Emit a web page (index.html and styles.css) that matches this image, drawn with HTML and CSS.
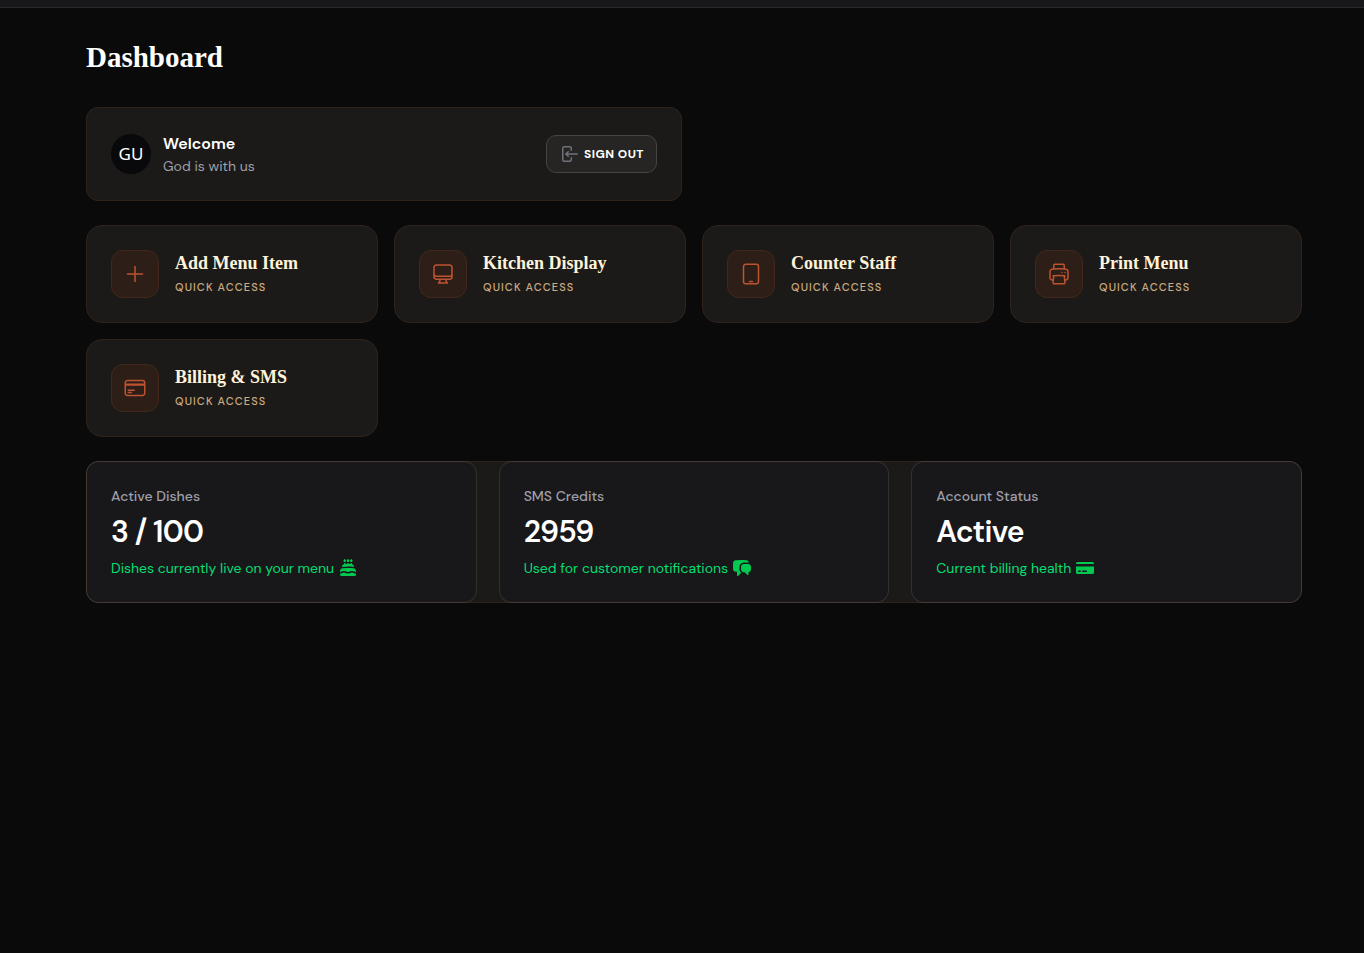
FILE: index.html
```html
<!DOCTYPE html>
<html lang="en">
<head>
    <meta charset="UTF-8">
    <meta name="viewport" content="width=device-width, initial-scale=1.0">
    <title>Dashboard</title>
    <link rel="stylesheet" href="styles.css">
</head>
<body>
    <div class="topbar"></div>
    <main class="page">
        <h1>Dashboard</h1>

        <div class="widgets">
            <section class="card account">
                <div class="avatar">GU</div>
                <div class="account-text">
                    <h2>Welcome</h2>
                    <p>God is with us</p>
                </div>
                <button type="button" class="sign-out">
                    <svg viewBox="0 0 20 20" aria-hidden="true"><path d="M3 4.25A2.25 2.25 0 0 1 5.25 2h5.5A2.25 2.25 0 0 1 13 4.25v2a.75.75 0 0 1-1.5 0v-2a.75.75 0 0 0-.75-.75h-5.5a.75.75 0 0 0-.75.75v11.5c0 .414.336.75.75.75h5.5a.75.75 0 0 0 .75-.75v-2a.75.75 0 0 1 1.5 0v2A2.25 2.25 0 0 1 10.75 18h-5.5A2.25 2.25 0 0 1 3 15.75V4.25Z"/><path d="M19 10a.75.75 0 0 0-.75-.75H8.704l1.048-.943a.75.75 0 1 0-1.004-1.114l-2.5 2.25a.75.75 0 0 0 0 1.114l2.5 2.25a.75.75 0 1 0 1.004-1.114l-1.048-.943h9.546A.75.75 0 0 0 19 10Z"/></svg>
                    <span>SIGN OUT</span>
                </button>
            </section>

            <nav class="shortcuts">
                <a href="#" class="card shortcut">
                    <span class="shortcut-icon">
                        <svg viewBox="0 0 24 24" aria-hidden="true"><path d="M12 4.5v15m7.5-7.5h-15"/></svg>
                    </span>
                    <span class="shortcut-text">
                        <strong>Add Menu Item</strong>
                        <small>QUICK ACCESS</small>
                    </span>
                </a>
                <a href="#" class="card shortcut">
                    <span class="shortcut-icon">
                        <svg viewBox="0 0 24 24" aria-hidden="true"><path d="M9 17.25v1.007a3 3 0 0 1-.879 2.122L7.5 21h9l-.621-.621A3 3 0 0 1 15 18.257V17.25m6-12V15a2.25 2.25 0 0 1-2.25 2.25H5.25A2.25 2.25 0 0 1 3 15V5.25m18 0A2.25 2.25 0 0 0 18.75 3H5.25A2.25 2.25 0 0 0 3 5.25m18 0V12a2.25 2.25 0 0 1-2.25 2.25H5.25A2.25 2.25 0 0 1 3 12V5.25"/></svg>
                    </span>
                    <span class="shortcut-text">
                        <strong>Kitchen Display</strong>
                        <small>QUICK ACCESS</small>
                    </span>
                </a>
                <a href="#" class="card shortcut">
                    <span class="shortcut-icon">
                        <svg viewBox="0 0 24 24" aria-hidden="true"><path d="M10.5 19.5h3m-6.75 2.25h10.5a2.25 2.25 0 0 0 2.25-2.25v-15a2.25 2.25 0 0 0-2.25-2.25H6.75A2.25 2.25 0 0 0 4.5 4.5v15a2.25 2.25 0 0 0 2.25 2.25Z"/></svg>
                    </span>
                    <span class="shortcut-text">
                        <strong>Counter Staff</strong>
                        <small>QUICK ACCESS</small>
                    </span>
                </a>
                <a href="#" class="card shortcut">
                    <span class="shortcut-icon">
                        <svg viewBox="0 0 24 24" aria-hidden="true"><path d="M6.72 13.829c-.24.03-.48.062-.72.096m.72-.096a42.415 42.415 0 0 1 10.56 0m-10.56 0L6.34 18m10.94-4.171c.24.03.48.062.72.096m-.72-.096L17.66 18m0 0 .229 2.523a1.125 1.125 0 0 1-1.12 1.227H7.231c-.662 0-1.18-.568-1.12-1.227L6.34 18m11.318 0h1.091A2.25 2.25 0 0 0 21 15.75V9.456c0-1.081-.768-2.015-1.837-2.175a48.055 48.055 0 0 0-1.913-.247M6.34 18H5.25A2.25 2.25 0 0 1 3 15.75V9.456c0-1.081.768-2.015 1.837-2.175a48.041 48.041 0 0 1 1.913-.247m10.5 0a48.536 48.536 0 0 0-10.5 0m10.5 0V3.375c0-.621-.504-1.125-1.125-1.125h-8.25c-.621 0-1.125.504-1.125 1.125v3.659M18 10.5h.008v.008H18V10.5Zm-3 0h.008v.008H15V10.5Z"/></svg>
                    </span>
                    <span class="shortcut-text">
                        <strong>Print Menu</strong>
                        <small>QUICK ACCESS</small>
                    </span>
                </a>
                <a href="#" class="card shortcut">
                    <span class="shortcut-icon">
                        <svg viewBox="0 0 24 24" aria-hidden="true"><path d="M2.25 8.25h19.5M2.25 9h19.5m-16.5 5.25h6m-6 2.25h3m-3.75 3h15a2.25 2.25 0 0 0 2.25-2.25V6.75A2.25 2.25 0 0 0 19.5 4.5h-15a2.25 2.25 0 0 0-2.25 2.25v10.5A2.25 2.25 0 0 0 4.5 19.5Z"/></svg>
                    </span>
                    <span class="shortcut-text">
                        <strong>Billing &amp; SMS</strong>
                        <small>QUICK ACCESS</small>
                    </span>
                </a>
            </nav>

            <section class="stats">
                <div class="stat">
                    <p class="stat-label">Active Dishes</p>
                    <p class="stat-value">3 / 100</p>
                    <p class="stat-note">
                        <span>Dishes currently live on your menu</span>
                        <svg viewBox="0 0 20 20" aria-hidden="true"><path d="m6.75.98-.884.883a1.25 1.25 0 1 0 1.768 0L6.75.98ZM13.25.98l-.884.883a1.25 1.25 0 1 0 1.768 0L13.25.98ZM10 .98l.884.883a1.25 1.25 0 1 1-1.768 0L10 .98ZM7.5 5.75a.75.75 0 0 0-1.5 0v.464c-1.179.304-2 1.39-2 2.622v.094c.1-.02.202-.038.306-.052A42.867 42.867 0 0 1 10 8.5c1.93 0 3.83.129 5.694.378.104.014.206.032.306.052v-.094c0-1.232-.821-2.317-2-2.622V5.75a.75.75 0 0 0-1.5 0v.318a45.645 45.645 0 0 0-1.75-.062V5.75a.75.75 0 0 0-1.5 0v.256c-.586.01-1.17.03-1.75.062V5.75ZM4.505 10.365A41.36 41.36 0 0 1 10 10c1.863 0 3.697.124 5.495.365C16.967 10.562 18 11.838 18 13.28v.693a3.72 3.72 0 0 1-1.665-.393 5.222 5.222 0 0 0-4.67 0 3.722 3.722 0 0 1-3.33 0 5.222 5.222 0 0 0-4.67 0A3.72 3.72 0 0 1 2 13.972v-.693c0-1.441 1.033-2.717 2.505-2.914ZM15.665 14.92a5.22 5.22 0 0 0 2.335.552V16.5a1.5 1.5 0 0 1-1.5 1.5h-13A1.5 1.5 0 0 1 2 16.5v-1.028c.8 0 1.6-.184 2.335-.551a3.722 3.722 0 0 1 3.33 0c1.47.735 3.2.735 4.67 0a3.722 3.722 0 0 1 3.33 0Z"/></svg>
                    </p>
                </div>
                <div class="stat">
                    <p class="stat-label">SMS Credits</p>
                    <p class="stat-value">2959</p>
                    <p class="stat-note">
                        <span>Used for customer notifications</span>
                        <svg viewBox="0 0 20 20" aria-hidden="true"><path d="M3.505 2.365A41.369 41.369 0 0 1 9 2c1.863 0 3.697.124 5.495.365 1.247.167 2.18 1.108 2.435 2.268a4.45 4.45 0 0 0-.577-.069 43.141 43.141 0 0 0-4.706 0C9.229 4.696 7.5 6.727 7.5 8.998v2.24c0 1.413.67 2.735 1.76 3.562l-2.98 2.98A.75.75 0 0 1 5 17.25v-3.443c-.501-.048-1-.106-1.495-.172C2.033 13.438 1 12.162 1 10.72V5.28c0-1.441 1.033-2.717 2.505-2.914Z"/><path d="M14 6c-.762 0-1.52.02-2.271.062C10.157 6.148 9 7.472 9 8.998v2.24c0 1.519 1.147 2.839 2.71 2.935.214.013.428.024.642.034.2.009.385.09.518.224l2.35 2.35a.75.75 0 0 0 1.28-.531v-2.07c1.453-.195 2.5-1.463 2.5-2.915V8.998c0-1.526-1.157-2.85-2.729-2.936A41.645 41.645 0 0 0 14 6Z"/></svg>
                    </p>
                </div>
                <div class="stat">
                    <p class="stat-label">Account Status</p>
                    <p class="stat-value">Active</p>
                    <p class="stat-note">
                        <span>Current billing health</span>
                        <svg viewBox="0 0 20 20" aria-hidden="true"><path fill-rule="evenodd" d="M2.5 4A1.5 1.5 0 0 0 1 5.5V6h18v-.5A1.5 1.5 0 0 0 17.5 4h-15ZM19 8.5H1v6A1.5 1.5 0 0 0 2.5 16h15a1.5 1.5 0 0 0 1.5-1.5v-6ZM3 13.25a.75.75 0 0 1 .75-.75h1.5a.75.75 0 0 1 0 1.5h-1.5a.75.75 0 0 1-.75-.75Zm4.75-.75a.75.75 0 0 0 0 1.5h3.5a.75.75 0 0 0 0-1.5h-3.5Z"/></svg>
                    </p>
                </div>
            </section>
        </div>
    </main>
</body>
</html>
```
FILE: styles.css
```css
* {
    box-sizing: border-box;
}
body {
    margin: 0;
    background-color: #0a0a0a;
    color: #fff;
    font-family: "DM Sans", Inter, sans-serif;
    font-size: 14px;
    line-height: 20px;
}
h1, h2, p {
    margin: 0;
}
.topbar {
    height: 8px;
    background-color: #18181a;
    border-bottom: 1px solid #2a2a2b;
}
.page {
    padding: 31px 62px 32px 86px;
}
h1 {
    font-family: "Liberation Serif", serif;
    font-size: 29px;
    line-height: 36px;
    font-weight: 700;
}
.widgets {
    display: flex;
    flex-direction: column;
    gap: 24px;
    margin-top: 32px;
}
.card {
    display: flex;
    align-items: center;
    padding: 24px;
    background-color: #1c1a18;
    border: 1px solid #30231d;
    border-radius: 16px;
}
.account {
    width: calc(50% - 12px);
    gap: 12px;
    border-radius: 12px;
}
.account-text {
    flex: 1;
}
.account h2 {
    font-size: 16px;
    line-height: 24px;
    font-weight: 600;
}
.account p {
    color: #9f9fa9;
}
.avatar {
    width: 40px;
    height: 40px;
    border-radius: 50%;
    background-color: #09090b;
    font-family: "Noto Sans", sans-serif;
    font-size: 17px;
    line-height: 40px;
    text-align: center;
}
.sign-out {
    display: flex;
    align-items: center;
    gap: 5px;
    height: 38px;
    padding: 0 12px;
    background-color: #262524;
    border: 1px solid #454442;
    border-radius: 10px;
    color: #fff;
    font: 700 12px/20px "DM Sans", Inter, sans-serif;
    letter-spacing: 0.04em;
    cursor: pointer;
}
.sign-out svg {
    width: 20px;
    height: 20px;
    fill: #71717b;
}
.shortcuts {
    display: grid;
    grid-template-columns: repeat(4, 1fr);
    gap: 16px;
}
.shortcut {
    gap: 16px;
    color: inherit;
    text-decoration: none;
}
.shortcut-icon {
    display: flex;
    align-items: center;
    justify-content: center;
    width: 48px;
    height: 48px;
    background-color: #2d1f18;
    border: 1px solid #42281c;
    border-radius: 12px;
}
.shortcut-icon svg {
    width: 24px;
    height: 24px;
    fill: none;
    stroke: #bd5330;
    stroke-width: 1.5;
    stroke-linecap: round;
    stroke-linejoin: round;
}
.shortcut-text {
    display: flex;
    flex-direction: column;
    gap: 4px;
}
.shortcut strong {
    color: #fef3d9;
    font-family: "Liberation Serif", serif;
    font-size: 18px;
    line-height: 22px;
}
.shortcut small {
    color: #cbab83;
    font-size: 11px;
    line-height: 18px;
    font-weight: 500;
    letter-spacing: 0.1em;
}
.stats {
    display: grid;
    grid-template-columns: repeat(3, 1fr);
    gap: 24px;
    background-color: #1c1a18;
    border: 1px solid #30231d;
    border-radius: 12px;
}
.stat {
    display: flex;
    flex-direction: column;
    gap: 8px;
    padding: 24px;
    background-color: #18181b;
    border-radius: 12px;
    box-shadow: 0 0 0 1px rgba(255, 255, 255, 0.1);
}
.stat-label {
    color: #9f9fa9;
    font-weight: 500;
}
.stat-value {
    font-size: 30px;
    line-height: 36px;
    font-weight: 600;
    letter-spacing: -0.025em;
}
.stat-note {
    display: flex;
    align-items: center;
    gap: 4px;
    color: #05df72;
}
.stat-note svg {
    width: 20px;
    height: 20px;
    fill: #00c950;
}
```
